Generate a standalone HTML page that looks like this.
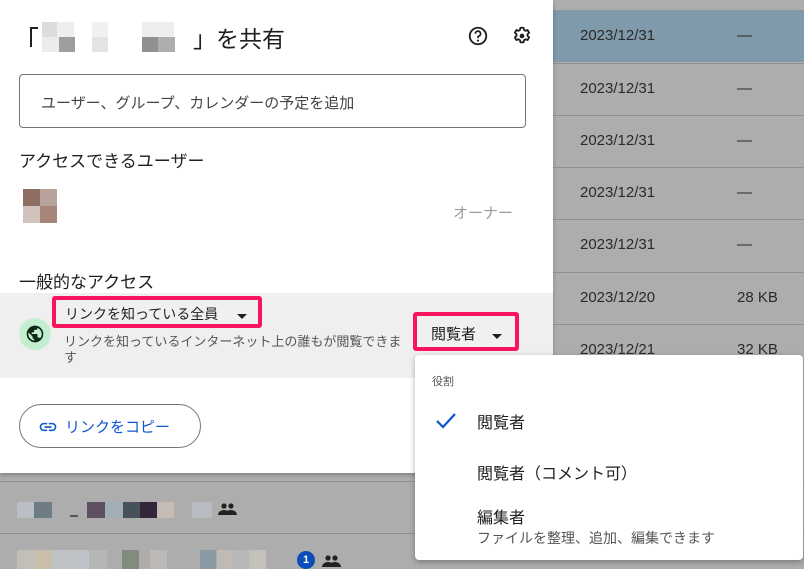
<!DOCTYPE html>
<html><head><meta charset="utf-8"><style>
*{margin:0;padding:0;box-sizing:border-box}
html,body{width:804px;height:569px;overflow:hidden}
body{background:#adadad;position:relative;font-family:"Liberation Sans","Noto Sans CJK JP",sans-serif;color:#1f1f1f}
.a{position:absolute}
.row{position:absolute;left:0;width:804px;height:52px;border-top:1px solid #8f8f8f}
.dt{position:absolute;left:580px;font-size:15px;color:#2a2a2a}
.sz{position:absolute;left:737px;font-size:15px;color:#2a2a2a}
.px{position:absolute}
</style></head><body>
<div class="row" style="top:10px;background:#7f9aab;border-top:1px solid #8a9aa5"></div>
<div class="row" style="top:63px"></div>
<div class="row" style="top:115px"></div>
<div class="row" style="top:167px"></div>
<div class="row" style="top:219px"></div>
<div class="row" style="top:272px"></div>
<div class="row" style="top:324px"></div>
<div class="row" style="top:481px"></div>
<div class="row" style="top:533px"></div>
<div class="dt" style="top:27px">2023/12/31</div><div class="sz" style="top:27px">—</div>
<div class="dt" style="top:80px">2023/12/31</div><div class="sz" style="top:80px">—</div>
<div class="dt" style="top:132px">2023/12/31</div><div class="sz" style="top:132px">—</div>
<div class="dt" style="top:184px">2023/12/31</div><div class="sz" style="top:184px">—</div>
<div class="dt" style="top:236px">2023/12/31</div><div class="sz" style="top:236px">—</div>
<div class="dt" style="top:289px">2023/12/20</div><div class="sz" style="top:289px">28 KB</div>
<div class="dt" style="top:341px">2023/12/21</div><div class="sz" style="top:341px">32 KB</div>
<!-- bottom blurred rows -->
<div class="px" style="left:17px;top:502px;width:17px;height:16px;background:#b9bfc4"></div>
<div class="px" style="left:34px;top:502px;width:18px;height:16px;background:#6e7d83"></div>
<div class="px" style="left:70px;top:515px;width:8px;height:2px;background:#555"></div>
<div class="px" style="left:87px;top:502px;width:18px;height:16px;background:#5e5062"></div>
<div class="px" style="left:105px;top:502px;width:18px;height:16px;background:#a1aeb3"></div>
<div class="px" style="left:123px;top:502px;width:17px;height:16px;background:#46515a"></div>
<div class="px" style="left:140px;top:502px;width:17px;height:16px;background:#33263a"></div>
<div class="px" style="left:157px;top:502px;width:17px;height:16px;background:#c4bbb4"></div>
<div class="px" style="left:192px;top:502px;width:20px;height:16px;background:#b7bcc2"></div>
<svg class="a" style="left:218px;top:502px" width="20" height="14" viewBox="0 0 20 14"><circle cx="6" cy="4" r="2.6" fill="#222"/><circle cx="13" cy="4" r="2.6" fill="#222"/><path d="M0 13c0-3 3-5 6-5s6 2 6 5zM10 13c0-2 0-3-1-4 1-.6 2.5-1 4-1 3 0 6 2 6 5z" fill="#222"/></svg>
<div class="px" style="left:17px;top:550px;width:90px;height:19px;background:linear-gradient(90deg,#c2bfb8 0 20%,#c9beaa 20% 40%,#bfc2c6 40% 80%,#b6b6b6 80%)"></div>
<div class="px" style="left:122px;top:550px;width:17px;height:19px;background:#818c7f"></div>
<div class="px" style="left:150px;top:550px;width:17px;height:19px;background:#bcb8b6"></div>
<div class="px" style="left:200px;top:550px;width:66px;height:19px;background:linear-gradient(90deg,#8a9aa4 0 25%,#c0bab6 25% 50%,#b8b8b8 50% 75%,#c4c0bc 75%)"></div>
<div class="a" style="left:297px;top:551px;width:18px;height:18px;border-radius:50%;background:#0b4db8;color:#fff;font-size:11px;text-align:center;line-height:18px;font-weight:bold">1</div>
<svg class="a" style="left:322px;top:554px" width="20" height="14" viewBox="0 0 20 14"><circle cx="6" cy="4" r="2.6" fill="#222"/><circle cx="13" cy="4" r="2.6" fill="#222"/><path d="M0 13c0-3 3-5 6-5s6 2 6 5zM10 13c0-2 0-3-1-4 1-.6 2.5-1 4-1 3 0 6 2 6 5z" fill="#222"/></svg>

<!-- dialog -->
<div class="a" style="left:0;top:0;width:553px;height:473px;background:#fff;border-radius:0 0 8px 0;box-shadow:0 2px 4px rgba(0,0,0,.25)">
 <div class="a" style="left:30px;top:27px;width:2px;height:20px;background:#1f1f1f"></div>
 <div class="a" style="left:30px;top:27px;width:8px;height:2px;background:#1f1f1f"></div>
 <div class="px" style="left:42px;top:22px;width:15px;height:15px;background:#dcdcdc"></div>
 <div class="px" style="left:57px;top:22px;width:17px;height:15px;background:#eeeeee"></div>
 <div class="px" style="left:42px;top:37px;width:17px;height:15px;background:#ececec"></div>
 <div class="px" style="left:59px;top:37px;width:16px;height:15px;background:#9e9e9e"></div>
 <div class="px" style="left:92px;top:22px;width:16px;height:30px;background:linear-gradient(#f0f0f0 50%,#e3e3e3 50%)"></div>
 <div class="px" style="left:142px;top:22px;width:32px;height:15px;background:#eeeeee"></div>
 <div class="px" style="left:142px;top:37px;width:16px;height:15px;background:#909090"></div>
 <div class="px" style="left:158px;top:37px;width:17px;height:15px;background:#adadad"></div>
 <div class="a" style="left:193px;top:20px;font-size:23px;color:#1f1f1f">」を共有</div>
 <svg class="a" style="left:467px;top:25px" width="22" height="22" viewBox="0 0 24 24"><circle cx="12" cy="12" r="9" fill="none" stroke="#1f1f1f" stroke-width="2"/><path d="M9.2 9.5a2.8 2.8 0 1 1 3.8 2.6c-.7.3-1 .8-1 1.6v.6" fill="none" stroke="#1f1f1f" stroke-width="1.9"/><circle cx="12" cy="17" r="1.2" fill="#1f1f1f"/></svg>
 <svg class="a" style="left:511px;top:25px" width="22" height="22" viewBox="0 0 24 24"><path fill="none" stroke="#1f1f1f" stroke-width="2" stroke-linejoin="round" d="M10.3 3h3.4l.5 2.4 1.6.9 2.3-.8 1.7 2.9-1.8 1.6v1.9l1.8 1.6-1.7 2.9-2.3-.8-1.6.9-.5 2.4h-3.4l-.5-2.4-1.6-.9-2.3.8-1.7-2.9 1.8-1.6v-1.9L4.2 8.4l1.7-2.9 2.3.8 1.6-.9z"/><circle cx="12" cy="12" r="2.6" fill="#1f1f1f"/></svg>
 <div class="a" style="left:19px;top:74px;width:507px;height:54px;border:1px solid #747775;border-radius:4px"></div>
 <div class="a" style="left:41px;top:92px;font-size:15px;color:#444">ユーザー、グループ、カレンダーの予定を追加</div>
 <div class="a" style="left:19px;top:147px;font-size:17px;color:#1f1f1f">アクセスできるユーザー</div>
 <div class="px" style="left:23px;top:189px;width:17px;height:17px;background:#8f6e62"></div>
 <div class="px" style="left:40px;top:189px;width:17px;height:17px;background:#b8a29c"></div>
 <div class="px" style="left:23px;top:206px;width:17px;height:17px;background:#d1c2be"></div>
 <div class="px" style="left:40px;top:206px;width:17px;height:17px;background:#a78579"></div>
 <div class="a" style="left:453px;top:202px;font-size:15px;color:#9a9a9a">オーナー</div>
 <div class="a" style="left:19px;top:268px;font-size:17px;color:#1f1f1f">一般的なアクセス</div>
 <div class="a" style="left:0;top:293px;width:553px;height:85px;background:#efefef"></div>
 <div class="a" style="left:19px;top:318px;width:32px;height:32px;border-radius:50%;background:#c4eed0"></div>
 <svg class="a" style="left:25px;top:324px" width="20" height="20" viewBox="0 0 24 24"><path fill="#0e2a17" d="M12 2a10 10 0 1 0 0 20 10 10 0 0 0 0-20zM11 19.9A8 8 0 0 1 4.2 10.2L9 15v1a2 2 0 0 0 2 2zm6.9-2.5A2 2 0 0 0 16 16h-1v-3a1 1 0 0 0-1-1H8v-2h2a1 1 0 0 0 1-1V7h2a2 2 0 0 0 2-2v-.4a8 8 0 0 1 2.9 12.8z"/></svg>
 <div class="a" style="left:52px;top:296px;width:210px;height:32px;border:4px solid #f8155e;border-radius:3px;background:#f0f0f0"></div>
 <div class="a" style="left:65px;top:304px;font-size:14px;color:#1f1f1f">リンクを知っている全員</div>
 <div class="a" style="left:237px;top:314px;width:0;height:0;border-left:5px solid transparent;border-right:5px solid transparent;border-top:5px solid #1f1f1f"></div>
 <div class="a" style="left:64px;top:334px;width:350px;font-size:13px;line-height:16px;color:#555">リンクを知っているインターネット上の誰もが閲覧できます</div>
 <div class="a" style="left:413px;top:312px;width:106px;height:39px;border:4px solid #f8155e;border-radius:3px;background:#f0f0f0"></div>
 <div class="a" style="left:431px;top:323px;font-size:15px;color:#1f1f1f">閲覧者</div>
 <div class="a" style="left:492px;top:334px;width:0;height:0;border-left:5px solid transparent;border-right:5px solid transparent;border-top:5px solid #1f1f1f"></div>
 <div class="a" style="left:19px;top:404px;width:182px;height:44px;border:1px solid #747775;border-radius:22px"></div>
 <svg class="a" style="left:38px;top:417px" width="20" height="20" viewBox="0 0 24 24"><path fill="#0b57d0" d="M3.9 12c0-1.7 1.4-3.1 3.1-3.1h4V7H7a5 5 0 0 0 0 10h4v-1.9H7c-1.7 0-3.1-1.4-3.1-3.1zM8 13h8v-2H8zm9-6h-4v1.9h4c1.7 0 3.1 1.4 3.1 3.1s-1.4 3.1-3.1 3.1h-4V17h4a5 5 0 0 0 0-10z"/></svg>
 <div class="a" style="left:65px;top:416px;font-size:15px;color:#0b57d0">リンクをコピー</div>
</div>

<!-- menu -->
<div class="a" style="left:415px;top:355px;width:388px;height:205px;background:#fff;border-radius:4px;box-shadow:0 2px 6px rgba(0,0,0,.3)">
 <div class="a" style="left:17px;top:18px;font-size:11px;color:#555">役割</div>
 <svg class="a" style="left:20px;top:57px" width="22" height="18" viewBox="0 0 22 18"><path d="M2 9l6 6L20 2" fill="none" stroke="#0b57d0" stroke-width="2.2"/></svg>
 <div class="a" style="left:62px;top:54px;font-size:16px;color:#1f1f1f">閲覧者</div>
 <div class="a" style="left:62px;top:105px;font-size:16px;color:#1f1f1f">閲覧者（コメント可）</div>
 <div class="a" style="left:62px;top:149px;font-size:16px;color:#1f1f1f">編集者</div>
 <div class="a" style="left:62px;top:173px;font-size:14px;color:#555">ファイルを整理、追加、編集できます</div>
</div>
</body></html>
